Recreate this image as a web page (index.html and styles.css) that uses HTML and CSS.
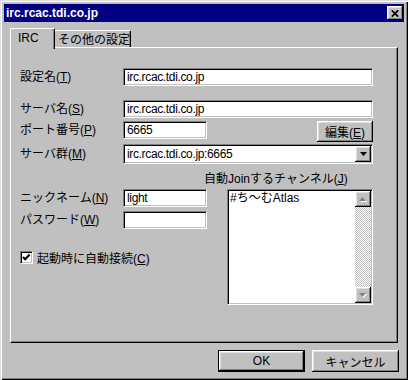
FILE: index.html
```html
<!DOCTYPE html>
<html lang="ja">
<head>
  <meta charset="UTF-8" />
  <title>irc.rcac.tdi.co.jp</title>
  <link rel="stylesheet" href="styles.css">
</head>
<body>

  <div class="window">
    <!-- Title bar -->
    <div class="titlebar">
      <span class="title">irc.rcac.tdi.co.jp</span>
      <button class="close-btn" aria-label="close">
        <svg width="8" height="7" viewBox="0 0 8 7"><path d="M0.8 0.3 L7.2 6.7 M7.2 0.3 L0.8 6.7" stroke="#000" stroke-width="1.7" fill="none"/></svg>
      </button>
    </div>

    <!-- Tabs -->
    <div class="tabs">
      <div class="tab active">IRC</div>
      <div class="tab">その他の設定</div>
    </div>

    <div class="panel">
      <div class="row">
        <label class="label">設定名(<u>T</u>)</label>
        <input class="field wide" type="text" value="irc.rcac.tdi.co.jp">
      </div>

      <div class="row server-row">
        <label class="label">サーバ名(<u>S</u>)</label>
        <input class="field wide" type="text" value="irc.rcac.tdi.co.jp">
      </div>

      <div class="row port-row">
        <label class="label">ポート番号(<u>P</u>)</label>
        <input class="field short" type="text" value="6665">
        <button class="btn edit-btn">編集(<u>E</u>)</button>
      </div>

      <div class="row combo-row">
        <label class="label">サーバ群(<u>M</u>)</label>
        <div class="field wide combo">
          <span class="combo-text">irc.rcac.tdi.co.jp:6665</span>
          <span class="arrow-btn">
            <svg width="7" height="4" viewBox="0 0 7 4"><polygon points="0,0 7,0 3.5,4" fill="#000"/></svg>
          </span>
        </div>
      </div>

      <div class="join-label">自動Joinするチャンネル(<u>J</u>)</div>

      <div class="lower">
        <div class="lower-left">
          <div class="row">
            <label class="label">ニックネーム(<u>N</u>)</label>
            <input class="field short" type="text" value="light">
          </div>
          <div class="row pass-row">
            <label class="label">パスワード(<u>W</u>)</label>
            <input class="field short" type="password" value="">
          </div>
          <div class="check-row">
            <span class="checkbox">
              <svg width="9" height="9" viewBox="0 0 9 9"><polyline points="1,4 3.2,6.2 7.6,1.6" stroke="#000" stroke-width="2.2" fill="none"/></svg>
            </span>
            <span>起動時に自動接続(<u>C</u>)</span>
          </div>
        </div>

        <div class="listbox">
          <div class="list-items">
            <div class="list-item">#ち〜むAtlas</div>
          </div>
          <div class="scrollbar">
            <span class="arrow-btn">
              <svg width="8" height="5" viewBox="0 0 8 5"><polygon points="4.5,1 8,5 1,5" fill="#fff"/><polygon points="3.5,0 7,4 0,4" fill="#808080"/></svg>
            </span>
            <span class="track"></span>
            <span class="arrow-btn">
              <svg width="8" height="5" viewBox="0 0 8 5"><polygon points="1,1 8,1 4.5,5" fill="#fff"/><polygon points="0,0 7,0 3.5,4" fill="#808080"/></svg>
            </span>
          </div>
        </div>
      </div>
    </div>

    <div class="buttons">
      <button class="btn default">OK</button>
      <button class="btn">キャンセル</button>
    </div>
  </div>

</body>
</html>
```

FILE: styles.css
```css
* {
  box-sizing: border-box;
  margin: 0;
  padding: 0;
}

html, body {
  width: 408px;
  height: 380px;
  overflow: hidden;
  background: #c0c0c0;
  font-family: "Liberation Sans", "Noto Sans CJK JP", sans-serif;
  font-size: 12px;
  color: #000;
}

/* Window frame */
.window {
  width: 408px;
  height: 380px;
  padding: 4px;
  background: #c0c0c0;
  box-shadow: inset 1px 1px #dfdfdf, inset 2px 2px #fff,
              inset -1px -1px #000, inset -2px -2px #808080;
}

.titlebar {
  height: 18px;
  display: flex;
  align-items: center;
  justify-content: space-between;
  padding: 0 1px 0 2px;
  background: #000080;
  color: #fff;
  font-weight: bold;
}

.title {
  line-height: 18px;
}

.close-btn,
.arrow-btn,
.btn {
  background: #c0c0c0;
  border: none;
  box-shadow: inset -1px -1px #000, inset 1px 1px #fff,
              inset -2px -2px #808080, inset 2px 2px #dfdfdf;
}

.close-btn {
  width: 16px;
  height: 14px;
  display: flex;
  align-items: center;
  justify-content: center;
  padding-top: 1px;
}

/* Tabs */
.tabs {
  display: flex;
  align-items: flex-start;
  height: 19px;
  margin: 6px 0 0 6px;
}

.tab {
  height: 17px;
  margin-top: 2px;
  width: 76px;
  padding: 2px 0 0 3px;
  line-height: 14px;
  background: #c0c0c0;
  border-top: 1px solid #fff;
  border-right: 1px solid #000;
  border-radius: 0 2px 0 0;
  box-shadow: inset -1px 0 #808080;
}

.tab.active {
  position: relative;
  z-index: 1;
  height: 21px;
  margin-top: 0;
  width: 45px;
  padding: 2px 0 0 7px;
  border-left: 1px solid #fff;
  border-radius: 2px 2px 0 0;
}

/* Panel */
.panel {
  height: 296px;
  margin: 0 6px;
  padding: 20px 0 0 9px;
  border: 1px solid;
  border-color: #fff #000 #000 #fff;
  box-shadow: inset -1px -1px #808080;
}

.row {
  display: flex;
  align-items: center;
}

.label {
  width: 103px;
  flex-shrink: 0;
  line-height: 18px;
}

.field {
  height: 18px;
  flex-shrink: 0;
  padding: 0 2px 0 3px;
  background: #fff;
  border: 1px solid;
  border-color: #808080 #fff #fff #808080;
  box-shadow: inset 1px 1px #000, inset -1px -1px #c0c0c0;
  font: inherit;
  letter-spacing: -0.35px;
  outline: none;
}

.wide { width: 250px; }
.short { width: 84px; }

.server-row { margin-top: 14px; }

.port-row {
  margin-top: 3px;
  align-items: flex-start;
}

.combo-row { margin-top: 2px; }

.combo {
  height: 20px;
  display: flex;
  align-items: center;
  justify-content: space-between;
  padding-right: 1px;
}

.arrow-btn {
  width: 16px;
  height: 16px;
  display: flex;
  align-items: center;
  justify-content: center;
}

.join-label {
  margin-top: 5px;
  padding-left: 184px;
  line-height: 20px;
}

/* Lower section */
.lower {
  display: flex;
  align-items: flex-start;
}

.lower-left {
  width: 187px;
}

.pass-row { margin-top: 4px; }

.check-row {
  display: flex;
  align-items: center;
  gap: 4px;
  margin-top: 22px;
  height: 13px;
}

.checkbox {
  width: 13px;
  height: 13px;
  display: flex;
  align-items: center;
  justify-content: center;
  background: #fff;
  border: 1px solid;
  border-color: #808080 #fff #fff #808080;
  box-shadow: inset 1px 1px #000, inset -1px -1px #c0c0c0;
}

.listbox {
  width: 146px;
  height: 116px;
  margin-left: 20px;
  display: flex;
  padding: 1px;
  background: #fff;
  border: 1px solid;
  border-color: #808080 #fff #fff #808080;
  box-shadow: inset 1px 1px #000, inset -1px -1px #c0c0c0;
}

.list-items {
  flex: 1;
  padding-left: 1px;
}

.list-item {
  line-height: 14px;
}

.scrollbar {
  width: 16px;
  display: flex;
  flex-direction: column;
}

.track {
  flex: 1;
  background-image: conic-gradient(#fff 25%, #c0c0c0 0 50%, #fff 0 75%, #c0c0c0 0);
  background-size: 2px 2px;
}

/* Dialog buttons */
.buttons {
  display: flex;
  justify-content: flex-end;
  gap: 7px;
  margin: 7px 5px 0 0;
}

.btn {
  width: 87px;
  height: 22px;
  font: inherit;
  color: #000;
}

.btn.default {
  border: 1px solid #000;
}

.btn.edit-btn {
  width: 56px;
  height: 21px;
  margin-left: 110px;
}
```
